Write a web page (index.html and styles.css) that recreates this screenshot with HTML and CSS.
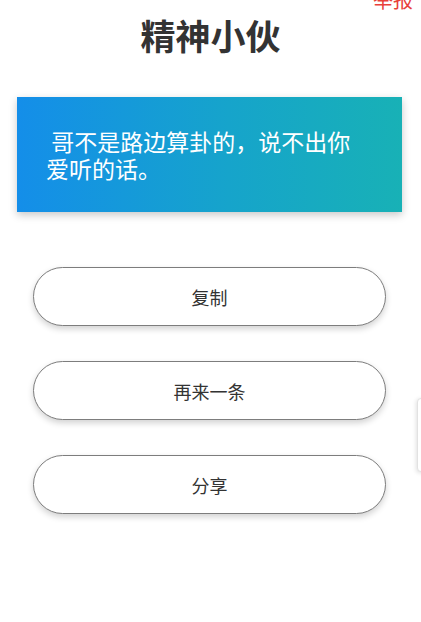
FILE: index.html
```html
<!DOCTYPE html>
<html lang="zh">
<head>
<meta charset="utf-8">
<title>精神小伙</title>
<link rel="stylesheet" href="styles.css">
</head>
<body>
<div class="page">
  <a class="report">举报</a>
  <h1 class="title">精神小伙</h1>
  <div class="card">
    <p class="quote"> 哥不是路边算卦的，说不出你爱听的话。</p>
  </div>
  <div class="actions">
    <button class="btn">复制</button>
    <button class="btn">再来一条</button>
    <button class="btn">分享</button>
  </div>
  <div class="side-tab"></div>
</div>
</body>
</html>
```

FILE: styles.css
```css
html, body {
  margin: 0;
  padding: 0;
  background: #ffffff;
}
body {
  font-family: "Noto Sans CJK SC", "Noto Sans", sans-serif;
  color: #333333;
}
.page {
  position: relative;
  width: 421px;
  height: 622px;
  overflow: hidden;
  display: flex;
  flex-direction: column;
  align-items: center;
}
.report {
  position: absolute;
  top: -14px;
  right: 8px;
  font-size: 20px;
  line-height: 28px;
  color: #e8403a;
}
.title {
  margin: 13px 0 0 0;
  height: 44px;
  line-height: 44px;
  font-size: 35px;
  font-weight: 700;
  color: #333333;
  text-align: center;
}
.card {
  box-sizing: border-box;
  margin-top: 40px;
  margin-left: -2px;
  width: 385px;
  height: 115px;
  padding: 31px 40px 0 29px;
  background: linear-gradient(90deg, #148ee9 0%, #16a4cb 55%, #18b1b6 100%);
  box-shadow: 0 3px 8px rgba(0, 0, 0, 0.22);
}
.quote {
  margin: 0;
  font-size: 23px;
  line-height: 27px;
  color: #ffffff;
  white-space: pre-wrap;
}
.actions {
  margin-top: 55px;
  display: flex;
  flex-direction: column;
  gap: 35px;
  margin-left: -2px;
}
.btn {
  box-sizing: border-box;
  width: 353px;
  height: 59px;
  border: 1px solid #7d7d7d;
  border-radius: 30px;
  background: #ffffff;
  box-shadow: 0 3px 6px rgba(0, 0, 0, 0.18);
  font-family: "Noto Sans CJK SC", "Noto Sans", sans-serif;
  font-size: 18px;
  color: #333333;
  padding: 0;
}
.side-tab {
  position: absolute;
  top: 398px;
  left: 417px;
  width: 20px;
  height: 72px;
  border: 1px solid #e2e2e2;
  border-radius: 4px;
  background: #ffffff;
  box-shadow: -1px 1px 4px rgba(0, 0, 0, 0.12);
}
```
